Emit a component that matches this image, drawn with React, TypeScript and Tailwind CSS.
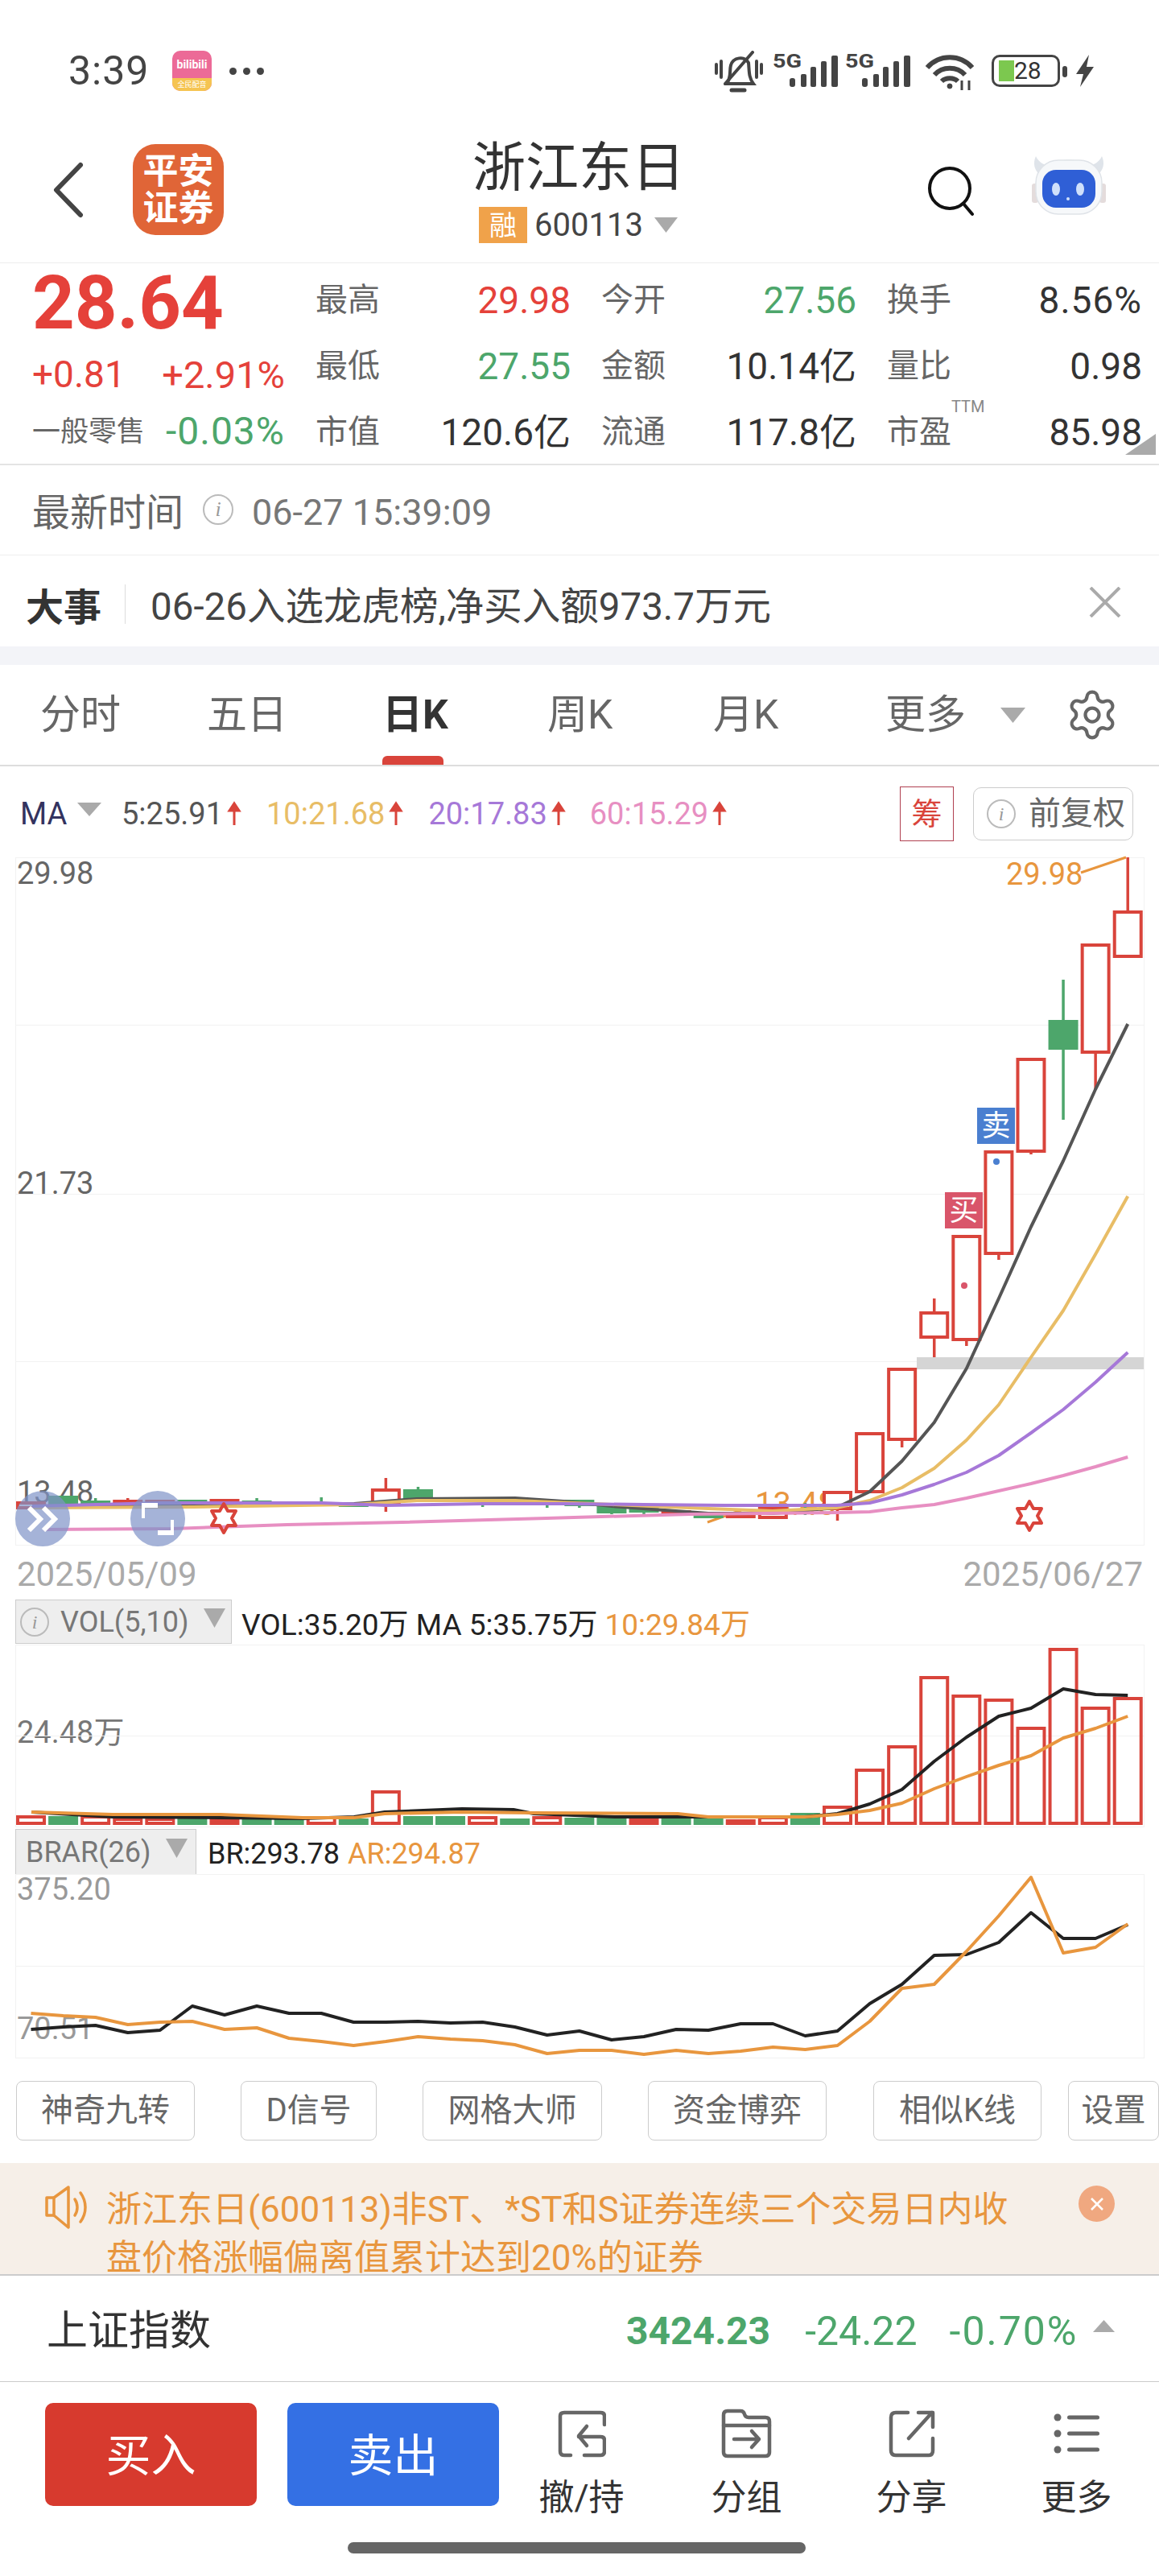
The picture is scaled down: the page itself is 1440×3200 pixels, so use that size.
import React from 'react';
import { Settings } from 'lucide-react';

const RED = '#d9443b';
const GREEN = '#4da66b';
const ORANGE = '#e8963e';
const cx = (i: number) => 38.5 + i * 40.08;
const line = (pts: number[][]) => pts.map((p) => p.join(',')).join(' ');
const byIndex = (ys: number[]) => ys.map((y, i) => [cx(i), y]);

// [index, up?, bodyTop, bodyBottom, wickTop, wickBottom]
const candles: [number, boolean, number, number, number, number][] = [
  [0, true, 1868, 1874, 1868, 1874],
  [1, false, 1859, 1872, 1859, 1872],
  [2, false, 1865, 1870, 1862, 1870],
  [3, true, 1866, 1870, 1862, 1870],
  [4, true, 1866, 1869, 1866, 1869],
  [5, false, 1864, 1869, 1864, 1869],
  [6, true, 1865, 1868, 1865, 1868],
  [7, false, 1865, 1868, 1862, 1868],
  [8, false, 1869, 1870, 1867, 1873],
  [9, false, 1867, 1868, 1861, 1872],
  [10, false, 1868, 1873, 1868, 1873],
  [11, true, 1852, 1868, 1837, 1879],
  [12, false, 1851, 1866, 1848, 1866],
  [14, false, 1868, 1869, 1868, 1873],
  [16, false, 1868, 1869, 1868, 1874],
  [17, false, 1864, 1872, 1864, 1874],
  [18, false, 1872, 1881, 1872, 1882],
  [19, false, 1872, 1880, 1872, 1885],
  [20, true, 1879, 1881, 1879, 1881],
  [21, false, 1882, 1887, 1882, 1887],
  [22, true, 1884, 1885, 1884, 1887],
  [23, true, 1874, 1886, 1874, 1886],
  [24, false, 1872, 1873, 1868, 1883],
  [25, true, 1855, 1875, 1855, 1890],
  [26, true, 1782, 1854, 1782, 1854],
  [27, true, 1702, 1789, 1702, 1799],
  [28, true, 1632, 1662, 1614, 1687],
  [29, true, 1537, 1665, 1537, 1673],
  [30, true, 1432, 1558, 1432, 1566],
  [31, true, 1317, 1431, 1317, 1435],
  [32, false, 1268, 1305, 1218, 1392],
  [33, true, 1175, 1308, 1175, 1354],
  [34, true, 1134, 1189, 1066, 1189],
];

const ma5 = [[40, 1873], [240, 1871], [440, 1869], [478, 1866], [518, 1863], [640, 1862], [700, 1866], [760, 1872], [880, 1881], [960, 1881], [1039, 1874], [cx(26), 1854], [cx(27), 1816], [cx(28), 1768], [cx(29), 1701], [cx(30), 1614], [cx(31), 1525], [cx(32), 1443], [cx(33), 1354], [cx(34), 1273]];
const ma10 = [[40, 1874], [240, 1873], [440, 1870], [518, 1865], [640, 1865], [760, 1870], [880, 1875], [960, 1878], [1039, 1874], [cx(26), 1865], [cx(27), 1849], [cx(28), 1825], [cx(29), 1790], [cx(30), 1746], [cx(31), 1687], [cx(32), 1629], [cx(33), 1559], [cx(34), 1487]];
const ma20 = [[40, 1872], [200, 1868], [400, 1868], [480, 1871], [600, 1869], [700, 1869], [800, 1870], [900, 1871], [1039, 1871], [cx(26), 1868], [cx(27), 1858], [cx(28), 1845], [cx(29), 1830], [cx(30), 1809], [cx(31), 1781], [cx(32), 1752], [cx(33), 1718], [cx(34), 1681]];
const ma60 = [[54, 1901], [214, 1900], [357, 1895], [500, 1892], [679, 1887], [857, 1882], [1039, 1880], [cx(26), 1879], [cx(27), 1874], [cx(28), 1870], [cx(29), 1862], [cx(30), 1853], [cx(31), 1844], [cx(32), 1834], [cx(33), 1823], [cx(34), 1811]];

const volTops = [2256, 2257, 2256, 2259, 2259, 2259, 2260, 2261, 2261, 2257, 2260, 2225, 2257, 2257, 2257, 2260, 2257, 2259, 2259, 2260, 2259, 2260, 2261, 2257, 2253, 2244, 2198, 2169, 2083, 2106, 2111, 2146, 2048, 2121, 2109];
const volUp = [1, 0, 1, 1, 1, 0, 1, 0, 0, 1, 0, 1, 0, 0, 1, 0, 1, 0, 0, 1, 0, 0, 1, 1, 0, 1, 1, 1, 1, 1, 1, 1, 1, 1, 1];
const volBlack = [[39, 2252], [140, 2258], [274, 2259], [376, 2260], [440, 2258], [478, 2252], [574, 2248], [638, 2249], [663, 2254], [765, 2258], [861, 2258], [1000, 2258], [cx(25), 2254], [cx(26), 2242], [cx(27), 2224], [cx(28), 2189], [cx(29), 2159], [cx(30), 2133], [cx(31), 2123], [cx(32), 2099], [cx(33), 2106], [cx(34), 2107]];
const volOrange = [[39, 2252], [140, 2255], [274, 2255], [376, 2259], [440, 2259], [478, 2254], [574, 2252], [663, 2253], [842, 2254], [880, 2258], [1000, 2258], [cx(25), 2255], [cx(26), 2250], [cx(27), 2241], [cx(28), 2223], [cx(29), 2208], [cx(30), 2194], [cx(31), 2182], [cx(32), 2160], [cx(33), 2148], [cx(34), 2133]];

const brBlack = [2522, 2519, 2517, 2526, 2523, 2493, 2504, 2493, 2502, 2502, 2513, 2513, 2512, 2514, 2513, 2519, 2529, 2524, 2535, 2531, 2522, 2523, 2515, 2515, 2530, 2524, 2490, 2466, 2430, 2429, 2414, 2377, 2409, 2409, 2392];
const brOrange = [2502, 2505, 2507, 2516, 2513, 2512, 2522, 2520, 2533, 2537, 2542, 2537, 2531, 2534, 2536, 2541, 2552, 2548, 2548, 2553, 2548, 2552, 2549, 2544, 2547, 2542, 2512, 2471, 2466, 2425, 2381, 2333, 2427, 2420, 2391];

const tabs = [
  { label: '分时', cls: 'w-[207px] text-[#666]' },
  { label: '五日', cls: 'w-[218px] text-[#666]' },
  { label: '日K', cls: 'w-[205px] font-bold text-[#333]' },
  { label: '周K', cls: 'w-[206px] text-[#666]' },
  { label: '月K', cls: 'w-[214px] text-[#666]' },
];

const tools = [
  { label: '神奇九转', cls: 'w-[222px] mr-[57px]' },
  { label: 'D信号', cls: 'w-[169px] mr-[57px]' },
  { label: '网格大师', cls: 'w-[223px] mr-[57px]' },
  { label: '资金博弈', cls: 'w-[222px] mr-[58px]' },
  { label: '相似K线', cls: 'w-[209px] mr-[33px]' },
  { label: '设置', cls: 'w-[113px]' },
];

const Tri = ({ up = false, cls }: { up?: boolean; cls: string }) => (
  <svg viewBox="0 0 30 20" preserveAspectRatio="none" className={`shrink-0 ${cls}`}>
    <polygon points={up ? '15,0 30,20 0,20' : '0,0 30,0 15,20'} fill="#aaa" />
  </svg>
);

const Info = ({ cls }: { cls: string }) => (
  <span className={`flex shrink-0 items-center justify-center rounded-full border-2 border-[#bbb] font-['Liberation_Serif',serif] italic leading-none text-[#999] ${cls}`}>
    i
  </span>
);

const Signal = () => (
  <svg width="81" height="49" viewBox="0 -4 81 49" fill="#444">
    <text x="0" y="20" fontSize="24" fontWeight="700" textLength="36" lengthAdjust="spacingAndGlyphs">5G</text>
    <rect x="21" y="33" width="7" height="11" rx="3" />
    <rect x="35" y="28" width="7" height="16" rx="2" />
    <rect x="47" y="19" width="7" height="25" rx="2" />
    <rect x="60" y="12" width="7" height="32" rx="2" />
    <rect x="73" y="5" width="8" height="39" rx="2" />
  </svg>
);

const Arrow = ({ color }: { color: string }) => (
  <svg width="20" height="32" viewBox="0 0 20 32" className="ml-[4px]">
    <path d="M10 30 V6 M4 12 L10 3 L16 12 Z" stroke={color} strokeWidth="3" fill={color} />
  </svg>
);

const MaVal = ({ text, cls, gap }: { text: string; cls: string; gap: string }) => (
  <span className={`flex items-center ${gap}`}>
    <span className={cls}>{text}</span>
    <Arrow color="#d9443b" />
  </span>
);

export default function App() {
  return (
    <div className="w-[1440px] h-[3200px] overflow-hidden bg-white [font-family:Roboto,'Noto_Sans_CJK_SC',sans-serif]">
      {/* Status bar */}
      <div className="flex h-[160px] items-start pl-[85px] pt-[63px]">
        <span className="w-[129px] text-[50px] leading-[50px] tracking-[1px] text-[#444]">3:39</span>
        <div className="flex h-[50px] w-[49px] flex-col overflow-hidden rounded-[10px] bg-[#ec6a97]">
          <span className="flex h-[34px] items-center justify-center text-[14px] font-bold leading-none text-white">bilibili</span>
          <span className="flex h-[16px] items-center justify-center bg-[#f5c451] text-[9px] leading-none text-white">全民配音</span>
        </div>
        <div className="ml-[22px] flex h-[50px] items-center gap-[8px]">
          <span className="h-[9px] w-[9px] rounded-full bg-[#444]" />
          <span className="h-[9px] w-[9px] rounded-full bg-[#444]" />
          <span className="h-[9px] w-[9px] rounded-full bg-[#444]" />
        </div>
        <div className="ml-[560px] flex items-start">
          <svg width="60" height="52" viewBox="0 0 60 52" fill="none" stroke="#444" strokeWidth="4" strokeLinecap="round">
            <path d="M2 17 V28 M8 13 V33 M52 13 V33 M58 17 V28" />
            <path d="M15 41 C21 32 18 25 20 18 C23 8 37 6 42 15 C43 25 42 33 48 41 Z" />
            <path d="M21 49 H37" strokeWidth="5" />
            <path d="M13 41 L47 2" />
          </svg>
          <div className="ml-[12px] -mt-[3px]"><Signal /></div>
          <div className="ml-[9px] -mt-[3px]"><Signal /></div>
          <svg width="62" height="46" viewBox="0 0 62 46" fill="none" stroke="#444" strokeWidth="6" className="ml-[18px] mt-[4px]">
            <path d="M3 17 C18 0 44 0 59 17" />
            <path d="M12 26 C22 15 40 15 50 26" />
            <path d="M21 34 C26 29 36 29 41 34" />
            <circle cx="31" cy="40" r="3" fill="#444" strokeWidth="1" />
            <path d="M46 33 V45 M55 33 V45" strokeWidth="3" />
          </svg>
          <div className="relative ml-[21px] mt-[5px] h-[40px] w-[85px] rounded-[10px] border-[3px] border-[#444]">
            <span className="absolute left-[6px] top-[4px] h-[26px] w-[19px] bg-[#7cc84f]" />
            <span className="absolute left-[25px] top-[3px] text-[30px] leading-[28px] text-[#333]">28</span>
          </div>
          <span className="ml-[3px] mt-[19px] h-[14px] w-[6px] rounded-full bg-[#444]" />
          <svg width="26" height="40" viewBox="0 0 26 40" fill="#444" className="ml-[9px] mt-[5px]">
            <path d="M18 0 L2 24 H11 L7 40 L24 15 H15 Z" />
          </svg>
        </div>
      </div>

      {/* Nav */}
      <div className="relative flex h-[167px] items-start border-b border-[#eee]">
        <svg width="40" height="70" viewBox="0 0 40 70" fill="none" stroke="#444" strokeWidth="6" strokeLinecap="round" strokeLinejoin="round" className="ml-[65px] mt-[41px]">
          <path d="M35 4 L5 35 L35 66" />
        </svg>
        <div className="ml-[60px] mt-[19px] flex h-[113px] w-[113px] flex-col items-center justify-center rounded-[28px] bg-[#e06537] text-[44px] font-bold leading-[46px] text-white">
          <span>平安</span>
          <span>证券</span>
        </div>
        <div className="ml-[309px] flex w-[266px] flex-col">
          <span className="mt-[14px] text-[66px] leading-[70px] text-[#333]">浙江东日</span>
          <div className="mt-[13px] flex items-center pl-[8px]">
            <span className="flex h-[45px] w-[60px] items-center justify-center bg-[#f0a24a] text-[34px] leading-none text-white">融</span>
            <span className="ml-[9px] text-[40px] leading-[45px] text-[#444]">600113</span>
            <Tri cls="ml-[14px] h-[19px] w-[29px]" />
          </div>
        </div>
        <svg width="60" height="64" viewBox="0 0 60 64" fill="none" stroke="#111" strokeWidth="4" strokeLinecap="round" className="ml-[299px] mt-[46px]">
          <circle cx="28" cy="28" r="25" />
          <path d="M45 47 L56 60" />
        </svg>
        <svg width="92" height="74" viewBox="0 0 92 74" className="ml-[70px] mt-[33px]">
          <path d="M5 1 C1 10 3 18 10 24 L82 24 C89 18 91 10 87 1 C84 8 78 11 72 13 C56 3 36 3 20 13 C14 11 8 8 5 1 Z" fill="#dfe4ea" />
          <rect x="0" y="35" width="8" height="24" rx="3" fill="#e4dcdc" />
          <rect x="84" y="35" width="8" height="24" rx="3" fill="#e4dcdc" />
          <rect x="5" y="6" width="82" height="67" rx="28" fill="#f6f8fa" stroke="#dfe3e8" strokeWidth="1.5" />
          <rect x="13" y="18" width="66" height="47" rx="17" fill="#2f5fd6" />
          <ellipse cx="30" cy="42" rx="5" ry="8" fill="#cfe0fb" />
          <ellipse cx="60" cy="42" rx="5" ry="8" fill="#cfe0fb" />
          <circle cx="45" cy="54" r="2" fill="#cfe0fb" />
        </svg>
      </div>

      {/* Quote */}
      <div className="flex h-[251px] border-b-2 border-[#e4e4e4]">
        <div className="flex w-[395px] flex-col pl-[40px] pr-[41px]">
          <span className="flex h-[100px] items-center text-[92px] font-bold leading-none text-[#e5413a]">28.64</span>
          <div className="flex h-[76px] items-center justify-between leading-none text-[#e5413a]">
            <span className="text-[46px]">+0.81</span>
            <span className="text-[47px]">+2.91%</span>
          </div>
          <div className="flex h-[66px] items-center justify-between">
            <span className="text-[35px] leading-none text-[#666]">一般零售</span>
            <span className="text-[48px] leading-none tracking-[1px] text-[#4da66b]">-0.03%</span>
          </div>
        </div>
        <div className="relative grid w-[1024px] grid-cols-[314px_314px_314px] gap-x-[41px] auto-rows-[82px] pt-[5px] text-[46px] leading-none text-[#333]">
          {[
            ['最高', '29.98', 'text-[#e5413a]'],
            ['今开', '27.56', 'text-[#4da66b]'],
            ['换手', '8.56%', 'tracking-[1px]'],
            ['最低', '27.55', 'text-[#4da66b]'],
            ['金额', '10.14亿', ''],
            ['量比', '0.98', ''],
            ['市值', '120.6亿', ''],
            ['流通', '117.8亿', ''],
            ['市盈', '85.98', ''],
          ].map(([k, v, c]) => (
            <div key={k} className="flex items-center justify-between">
              <span className="relative -ml-[3px] text-[40px] text-[#666]">
                {k}
                {k === '市盈' && <span className="absolute left-[80px] top-[-22px] text-[20px] text-[#888]">TTM</span>}
              </span>
              <span className={c}>{v}</span>
            </div>
          ))}
          <svg width="38" height="26" viewBox="0 0 38 26" className="absolute bottom-[11px] right-[-17px]">
            <polygon points="38,0 38,26 0,26" fill="#aaa" />
          </svg>
        </div>
      </div>

      {/* Time */}
      <div className="flex h-[112px] items-center border-b border-[#eee] pl-[40px] pt-[5px]">
        <span className="text-[47px] leading-none text-[#666]">最新时间</span>
        <Info cls="ml-[24px] mb-[6px] h-[38px] w-[38px] text-[26px]" />
        <span className="ml-[23px] text-[45px] leading-none text-[#777]">06-27 15:39:09</span>
      </div>

      {/* Event */}
      <div className="flex h-[113px] items-center pl-[32px] pt-[16px]">
        <span className="text-[47px] font-bold leading-none text-[#333]">大事</span>
        <span className="ml-[29px] mb-[8px] h-[49px] w-px bg-[#ddd]" />
        <span className="ml-[31px] text-[47.5px] leading-none text-[#444]">06-26入选龙虎榜,净买入额973.7万元</span>
        <svg width="40" height="38" viewBox="0 0 40 38" fill="none" stroke="#aaa" strokeWidth="4" className="ml-auto mr-[47px] mb-[13px]">
          <path d="M2 1 L38 37 M38 1 L2 37" />
        </svg>
      </div>
      <div className="h-[23px] bg-[#f3f4f8]" />

      {/* Tabs */}
      <div className="flex h-[126px] items-center border-b-2 border-[#ddd] pl-[50px]">
        {tabs.map((t) => (
          <div key={t.label} className={`relative flex h-[124px] items-center text-[50px] leading-none ${t.cls}`}>
            {t.label}
            {t.label === '日K' && <span className="absolute bottom-0 left-0 h-[11px] w-[76px] rounded-t-[6px] bg-[#d9443b]" />}
          </div>
        ))}
        <span className="text-[50px] leading-none text-[#666]">更多</span>
        <Tri cls="ml-[43px] h-[19px] w-[31px]" />
        <Settings size={68} strokeWidth={1.5} color="#666" className="ml-[49px]" />
      </div>

      {/* MA legend */}
      <div className="flex h-[97px] items-center pl-[25px] pr-[32px] pt-[21px] text-[38px] leading-none">
        <span className="w-[57px] text-[#33335f]">MA</span>
        <Tri cls="ml-[14px] mb-[12px] h-[17px] w-[30px]" />
        <MaVal text="5:25.91" cls="text-[#555]" gap="ml-[25px]" />
        <MaVal text="10:21.68" cls="text-[#e8bd66]" gap="ml-[30px]" />
        <MaVal text="20:17.83" cls="text-[#a678d8]" gap="ml-[30px]" />
        <MaVal text="60:15.29" cls="text-[#e78fc2]" gap="ml-[29px]" />
        <span className="ml-auto flex h-[68px] w-[67px] items-center justify-center border border-[#b04050] text-[38px] text-[#d9443b]">筹</span>
        <div className="ml-[24px] flex h-[66px] w-[199px] items-center rounded-[10px] border border-[#ccc] pl-[16px] text-[40px] text-[#666]">
          <Info cls="h-[36px] w-[36px] text-[24px]" />
          <span className="ml-[16px]">前复权</span>
        </div>
      </div>

      {/* Main chart */}
      <div className="relative h-[875px] text-[38px] leading-none text-[#666]">
        <span className="absolute left-[21px] top-[17px]">29.98</span>
        <span className="absolute left-[21px] top-[402px]">21.73</span>
        <span className="absolute left-[21px] top-[786px]">13.48</span>
        <span className="absolute left-[1250px] top-[18px] text-[#e8963e]">29.98</span>
        <span className="absolute left-[938px] top-[800px] text-[40px] text-[#e8963e]">13.48</span>
        <svg width="1440" height="875" viewBox="0 1050 1440 875" fill="none" className="absolute inset-0">
          <rect x="19.5" y="1066.5" width="1402" height="854" stroke="#f2f2f2" />
          <path d="M20 1274.5 H1421 M20 1484.5 H1421 M20 1692.5 H1421" stroke="#f2f2f2" />
          <rect x="1139" y="1687" width="282" height="15" fill="#d5d5d5" />
          <polyline points="1343,1085 1399,1066" stroke={ORANGE} strokeWidth="3" />
          <polyline points="879,1892 921,1877" stroke={ORANGE} strokeWidth="3" />
          {candles.map(([i, up, top, bottom, wickTop, wickBottom]) => (
            <g key={i}>
              <path d={`M${cx(i)} ${wickTop} V${wickBottom}`} stroke={up ? RED : GREEN} strokeWidth="3.5" />
              {up ? (
                <rect x={cx(i) - 16.5} y={top} width="33" height={bottom - top} fill="#fff" stroke={RED} strokeWidth="4" />
              ) : (
                <rect x={cx(i) - 18.5} y={top} width="37" height={bottom - top} fill={GREEN} />
              )}
            </g>
          ))}
          <circle cx="1198" cy="1598" r="4" fill="#d9556a" />
          <circle cx="1238" cy="1444" r="4" fill="#4a7fd0" />
          <polyline points={line(ma5)} stroke="#555" strokeWidth="4" strokeLinejoin="round" />
          <polyline points={line(ma10)} stroke="#e8bd66" strokeWidth="4" strokeLinejoin="round" />
          <polyline points={line(ma20)} stroke="#a678d8" strokeWidth="4" strokeLinejoin="round" />
          <polyline points={line(ma60)} stroke="#e78fc2" strokeWidth="4" strokeLinejoin="round" />
          <path d="M278 1869 L283 1878 H293 L288 1887 L293 1896 H283 L278 1905 L273 1896 H263 L268 1887 L263 1878 H273 Z" stroke={RED} strokeWidth="4" strokeLinejoin="round" />
          <path d="M1279 1866 L1284 1875 H1294 L1289 1884 L1294 1893 H1284 L1279 1902 L1274 1893 H1264 L1269 1884 L1264 1875 H1274 Z" stroke={RED} strokeWidth="4" strokeLinejoin="round" />
        </svg>
        <span className="absolute left-[1214px] top-[327px] flex h-[45px] w-[47px] items-center justify-center bg-[#4a7fd0] text-[36px] text-white">卖</span>
        <span className="absolute left-[1174px] top-[432px] flex h-[45px] w-[47px] items-center justify-center bg-[#d9556a] text-[36px] text-white">买</span>
        <span className="absolute left-[19px] top-[803px] flex h-[69px] w-[68px] items-center justify-center rounded-full bg-[#7f93c8]/70">
          <svg width="40" height="32" viewBox="0 0 40 32" fill="none" stroke="#fff" strokeWidth="6">
            <path d="M3 2 L17 16 L3 30 M21 2 L35 16 L21 30" />
          </svg>
        </span>
        <span className="absolute left-[162px] top-[803px] flex h-[69px] w-[68px] items-center justify-center rounded-full bg-[#7f93c8]/70">
          <svg width="40" height="40" viewBox="0 0 40 40" fill="none" stroke="#fff" strokeWidth="6">
            <path d="M1 19 V3 H20 M39 21 V37 H20" />
          </svg>
        </span>
      </div>

      {/* Dates */}
      <div className="flex h-[60px] items-center justify-between pl-[21px] pr-[20px] pt-[4px] text-[42px] leading-none text-[#aaa]">
        <span>2025/05/09</span>
        <span>2025/06/27</span>
      </div>

      {/* VOL */}
      <div className="flex h-[59px] items-start pl-[19px] pt-[3px] leading-none">
        <div className="flex h-[55px] w-[269px] items-center border border-[#ccc] bg-[#eee] pl-[5px] text-[36px] text-[#777]">
          <Info cls="h-[36px] w-[36px] text-[24px]" />
          <span className="ml-[14px]">VOL(5,10)</span>
          <Tri cls="ml-[18px] mb-[10px] h-[24px] w-[27px]" />
        </div>
        <span className="ml-[12px] mt-[13px] text-[37px] text-[#222]">VOL:35.20万 MA 5:35.75万</span>
        <span className="ml-[9px] mt-[13px] text-[37px] text-[#e8963e]">10:29.84万</span>
      </div>
      <div className="relative h-[229px] text-[38px] leading-none text-[#777]">
        <span className="absolute left-[21px] top-[90px]">24.48万</span>
        <svg width="1440" height="229" viewBox="0 2044 1440 229" fill="none" className="absolute inset-0">
          <rect x="19.5" y="2044.5" width="1402" height="226" stroke="#f2f2f2" />
          <path d="M20 2157.5 H1421" stroke="#f2f2f2" />
          {volTops.map((top, i) =>
            volUp[i] ? (
              <rect key={i} x={cx(i) - 16.5} y={top + 2} width="33" height={2266 - top - 2} stroke={RED} strokeWidth="4" />
            ) : (
              <rect key={i} x={cx(i) - 18.5} y={top} width="37" height={2268 - top} fill={GREEN} />
            )
          )}
          <polyline points={line(volBlack)} stroke="#222" strokeWidth="4" strokeLinejoin="round" />
          <polyline points={line(volOrange)} stroke={ORANGE} strokeWidth="4" strokeLinejoin="round" />
        </svg>
      </div>

      {/* BRAR */}
      <div className="flex h-[56px] items-start pl-[19px] text-[36px] leading-none">
        <div className="flex h-[57px] w-[225px] items-center border border-[#ccc] bg-[#eee] pl-[12px] text-[#777]">
          <span>BRAR(26)</span>
          <Tri cls="ml-[18px] mb-[10px] h-[24px] w-[27px]" />
        </div>
        <span className="ml-[14px] mt-[13px] text-[#222]">BR:293.78</span>
        <span className="ml-[10px] mt-[13px] text-[#e8963e]">AR:294.87</span>
      </div>
      <div className="relative h-[231px] text-[38px] leading-none text-[#999]">
        <span className="absolute left-[21px] top-[0px]">375.20</span>
        <span className="absolute left-[21px] top-[173px]">70.51</span>
        <svg width="1440" height="231" viewBox="0 2329 1440 231" fill="none" className="absolute inset-0">
          <rect x="19.5" y="2329.5" width="1402" height="228" stroke="#f2f2f2" />
          <path d="M20 2443.5 H1421" stroke="#f2f2f2" />
          <polyline points={line(byIndex(brBlack))} stroke="#222" strokeWidth="4" strokeLinejoin="round" />
          <polyline points={line(byIndex(brOrange))} stroke={ORANGE} strokeWidth="4" strokeLinejoin="round" />
        </svg>
      </div>

      {/* Tool buttons */}
      <div className="flex h-[128px] items-start overflow-hidden pl-[20px] pt-[26px]">
        {tools.map((t) => (
          <div key={t.label} className={`flex h-[74px] shrink-0 items-center justify-center rounded-[8px] border border-[#ccc] text-[40px] leading-none text-[#666] ${t.cls}`}>
            {t.label}
          </div>
        ))}
      </div>

      {/* Notice */}
      <div className="flex h-[140px] border-b-2 border-[#ccc] bg-[#f6efe8] pl-[55px] pt-[28px]">
        <svg width="54" height="54" viewBox="0 0 54 54" fill="none" stroke="#e8963e" strokeWidth="3.5" strokeLinejoin="round" strokeLinecap="round" className="shrink-0">
          <path d="M12 15 H3 V37 H12 L30 52 V2 Z" />
          <path d="M12 15 V37" />
          <path d="M38 17 C42 23 42 31 38 37" />
          <path d="M45 9 C53 20 53 34 45 45" />
        </svg>
        <p className="ml-[23px] w-[1130px] text-[44px] leading-[60px] text-[#e8963e]">
          浙江东日(600113)非ST、*ST和S证券连续三个交易日内收盘价格涨幅偏离值累计达到20%的证券
        </p>
        <span className="ml-[78px] flex h-[45px] w-[45px] shrink-0 items-center justify-center rounded-full bg-[#f0a880]">
          <svg width="20" height="20" viewBox="0 0 20 20" stroke="#fff" strokeWidth="2.5">
            <path d="M3 3 L17 17 M17 3 L3 17" />
          </svg>
        </span>
      </div>

      {/* Index */}
      <div className="flex h-[132px] items-center border-b border-[#ccc] pl-[58px] pt-[6px] text-[50px] leading-none text-[#4da66b]">
        <span className="w-[720px] text-[51px] text-[#333]">上证指数</span>
        <span className="text-[48px] font-bold">3424.23</span>
        <span className="ml-[43px]">-24.22</span>
        <span className="ml-[40px] tracking-[2px]">-0.70%</span>
        <Tri up cls="ml-[18px] mb-[12px] h-[15px] w-[27px]" />
      </div>

      {/* Bottom bar */}
      <div className="flex h-[174px] items-start pl-[56px] pt-[26px]">
        <div className="flex h-[128px] w-[263px] items-center justify-center rounded-[10px] bg-[#d73a2e] pt-[4px] text-[56px] leading-none text-white">买入</div>
        <div className="ml-[38px] flex h-[128px] w-[263px] items-center justify-center rounded-[10px] bg-[#3470e4] pt-[4px] text-[56px] leading-none text-white">卖出</div>
        <div className="-mt-[26px] flex">
          <div className="flex w-[205px] flex-col items-center pt-[35px] text-[44px] leading-none text-[#333]">
            <svg width="60" height="60" viewBox="0 0 60 60" fill="none" stroke="#666" strokeWidth="4.5" strokeLinecap="round" strokeLinejoin="round">
              <path d="M16 56 H8 Q3 56 3 51 V7 Q3 3 8 3 H53 Q58 3 58 7 V18" />
              <path d="M33 56 H53 Q58 56 58 51 V37 Q58 33 53 33 H26" />
              <path d="M36 20 L26 32 L36 44" />
            </svg>
            <span className="mt-[27px]">撤/持</span>
          </div>
          <div className="flex w-[205px] flex-col items-center pt-[33px] text-[44px] leading-none text-[#333]">
            <svg width="63" height="62" viewBox="0 0 63 62" fill="none" stroke="#666" strokeWidth="4.5" strokeLinecap="round" strokeLinejoin="round">
              <path d="M3 18 V8 Q3 3 8 3 H24 Q28 3 29 7 Q30 11 34 11 H55 Q60 11 60 16 V54 Q60 59 55 59 H8 Q3 59 3 54 Z" />
              <path d="M3 21 H60" />
              <path d="M16 38 H47 M38 28 L47 38 L38 48" />
            </svg>
            <span className="mt-[27px]">分组</span>
          </div>
          <div className="flex w-[205px] flex-col items-center pt-[35px] text-[44px] leading-none text-[#333]">
            <svg width="58" height="60" viewBox="0 0 58 60" fill="none" stroke="#666" strokeWidth="4.5" strokeLinecap="round" strokeLinejoin="round">
              <path d="M24 3 H9 Q3 3 3 9 V50 Q3 56 9 56 H50 Q55 56 55 50 V35" />
              <path d="M25 35 L54 3 M37 3 H55 V21" />
            </svg>
            <span className="mt-[27px]">分享</span>
          </div>
          <div className="flex w-[205px] flex-col items-center pt-[39px] text-[44px] leading-none text-[#333]">
            <svg width="58" height="50" viewBox="0 0 58 50" fill="#666">
              <circle cx="5" cy="5" r="4.5" />
              <circle cx="5" cy="25" r="4.5" />
              <circle cx="5" cy="45" r="4.5" />
              <rect x="17" y="2.5" width="40" height="5" rx="2.5" />
              <rect x="17" y="22.5" width="40" height="5" rx="2.5" />
              <rect x="17" y="42.5" width="40" height="5" rx="2.5" />
            </svg>
            <span className="mt-[33px]">更多</span>
          </div>
        </div>
      </div>
      <div className="ml-[432px] mt-[25px] h-[14px] w-[569px] rounded-full bg-[#666]" />
    </div>
  );
}
